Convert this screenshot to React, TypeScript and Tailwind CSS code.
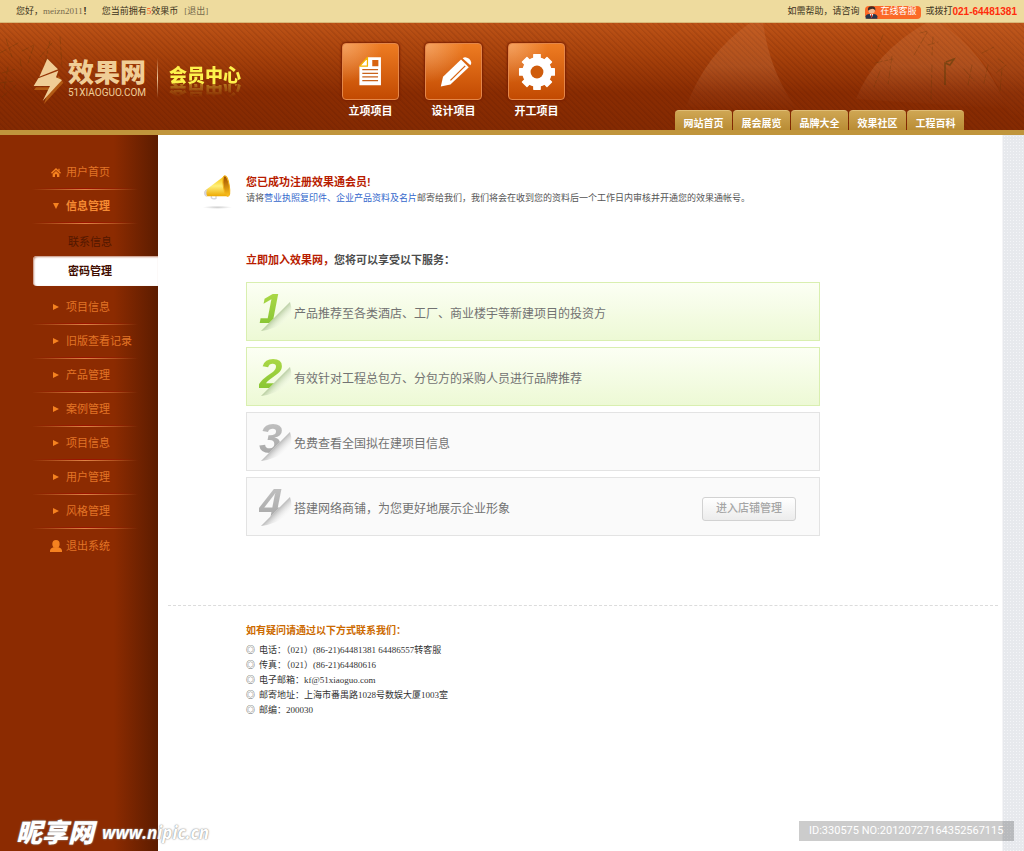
import type { ReactNode } from 'react';

const tinyText = 'font-["Liberation_Serif","Noto_Sans_CJK_SC",serif] text-[9px]';

const gearAngles = [0, 45, 90, 135];

function DocumentIcon() {
  return (
    <svg viewBox="0 0 171 171" className="size-full" aria-hidden="true">
      <path d="M76 41H118V128H51V70Z" fill="#fff" />
      <path d="M52 69L76 42V69Z" fill="#fff" stroke="#f5b301" strokeWidth="4" strokeLinejoin="round" />
      <path d="M91 50H110V69H91Z" fill="#d8630f" />
      <path d="M60 80H109M60 91H109M60 102H109M60 114H109" stroke="#c9631c" strokeWidth="4" />
    </svg>
  );
}

function PencilIcon() {
  return (
    <svg viewBox="0 0 171 171" className="size-full" aria-hidden="true">
      <path d="M46 132L53 102L109 48L133 72L76 126Z" fill="#fff" />
      <path d="M114 44Q122 37 134 46Q145 57 138 66Z" fill="#fff" />
      <path d="M110 46L138 71" stroke="#d8630f" strokeWidth="3" />
      <path d="M76 113L122 68" stroke="#d8630f" strokeWidth="4" />
    </svg>
  );
}

function GearIcon() {
  return (
    <svg viewBox="0 0 171 171" className="size-full" aria-hidden="true">
      {gearAngles.map((angle) => (
        <rect key={angle} x="75" y="31" width="24" height="112" rx="2" fill="#fff" transform={`rotate(${angle} 87 87)`} />
      ))}
      <circle cx="87" cy="87" r="46" fill="#fff" />
      <circle cx="87" cy="87" r="20" fill="#cf5c0c" />
    </svg>
  );
}

const projects: { label: string; icon: ReactNode }[] = [
  { label: '立项项目', icon: <DocumentIcon /> },
  { label: '设计项目', icon: <PencilIcon /> },
  { label: '开工项目', icon: <GearIcon /> },
];

const tabs = ['网站首页', '展会展览', '品牌大全', '效果社区', '工程百科'];

const lowerMenu = ['项目信息', '旧版查看记录', '产品管理', '案例管理', '项目信息', '用户管理', '风格管理'];

const services = [
  { text: '产品推荐至各类酒店、工厂、商业楼宇等新建项目的投资方', active: true },
  { text: '有效针对工程总包方、分包方的采购人员进行品牌推荐', active: true },
  { text: '免费查看全国拟在建项目信息', active: false },
  { text: '搭建网络商铺，为您更好地展示企业形象', active: false, action: '进入店铺管理' },
];

const contacts = [
  '电话：（021）(86-21)64481381 64486557转客服',
  '传真：（021）(86-21)64480616',
  '电子邮箱：kf@51xiaoguo.com',
  '邮寄地址：上海市番禺路1028号数娱大厦1003室',
  '邮编：200030',
];

function TopBar() {
  return (
    <div className={`${tinyText} flex h-[23px] items-center justify-between border-b border-[#d9b878] bg-[#eedb9e] pt-[2px] pr-[7px] pl-4 text-[#3c3320]`}>
      <p className="flex items-center whitespace-pre">
        <span>您好，</span>
        <span className="text-[#766a4c]">meizn2011</span>
        <span className="font-bold">！</span>
        <span className="ml-[10px]">您当前拥有</span>
        <span className="text-[#ff4a10]">5</span>
        <span>效果币</span>
        <a href="#logout" className="ml-[6px] text-[#766a4c]">[退出]</a>
      </p>
      <div className="flex items-center">
        <span>如需帮助，请咨询</span>
        <a href="#service" className="ml-[6px] flex h-[13px] items-center rounded-[4px] bg-[#fb6a28] pr-[5px] text-white">
          <svg viewBox="0 0 39 39" className="mr-[2px] size-[13px]" aria-hidden="true">
            <path d="M2 38V31Q3 25 13 24H26Q36 25 37 31V38Z" fill="#26364c" />
            <path d="M14 24H25L20 35Z" fill="#fff" />
            <path d="M18 25H21L22 32L20 36L18 32Z" fill="#c92b1c" />
            <circle cx="20" cy="13" r="10" fill="#f1b58b" />
            <path d="M9 14Q7 1 20 1Q33 1 31 14Q28 8 22 8Q14 9 9 14Z" fill="#3d2a25" />
          </svg>
          在线客服
        </a>
        <span className="ml-1">或拨打</span>
        <span className='font-["Liberation_Sans",sans-serif] text-[10px] leading-[12px] font-bold text-[#ff2d0c]'>021-64481381</span>
      </div>
    </div>
  );
}

function HeaderArt() {
  return (
    <>
      <svg viewBox="0 0 360 107" className="absolute top-0 right-0 h-[107px] w-[360px]" aria-hidden="true">
        <defs>
          <linearGradient id="petal" x1="0" y1="0" x2="0" y2="1">
            <stop offset="0" stopColor="#ffb98a" stopOpacity="0.1" />
            <stop offset="0.5" stopColor="#ffb98a" stopOpacity="0.16" />
            <stop offset="1" stopColor="#ffb98a" stopOpacity="0" />
          </linearGradient>
        </defs>
        <path d="M22 84Q42 30 86 0H99Q106 50 133 86Z" fill="url(#petal)" />
        <path d="M192 76Q210 30 262 0H276Q318 26 344 86Z" fill="url(#petal)" />
        <path d="M276 0H360V94H346Q326 30 276 0Z" fill="url(#petal)" opacity="0.5" />
        <g fill="none" stroke="#5a3506" strokeWidth="1" strokeLinecap="round" opacity="0.28" strokeDasharray="7 3 3 2">
          <path d="M219 12L213 27M211 40L229 36M228 33L224 62M216 48L210 64" />
          <path d="M256 10L264 8L250 32M264 22L274 19M269 14L268 32" />
          <path d="M268 42L267 76M300 46L310 58M308 42L304 62" />
          <path d="M324 42L320 60M334 36L342 42L332 50M338 46L336 68M318 30L330 24" />
        </g>
        <path d="M282 39L290 36L286 42L281 40V62" fill="none" stroke="#4c3a05" strokeWidth="1.5" opacity="0.5" />
      </svg>
      <svg viewBox="0 0 70 90" className="absolute top-0 left-0 h-[90px] w-[70px]" aria-hidden="true">
        <g fill="none" stroke="#5a3506" strokeWidth="1" strokeLinecap="round" opacity="0.3" strokeDasharray="7 3 3 2">
          <path d="M6 16L12 34M0 30L18 20M22 28L34 22L28 40M40 34L52 20M50 18L44 44M60 14L62 44" />
          <path d="M2 50L16 46M8 44L4 66M0 60L14 58M20 36L22 48M2 74L16 62" />
        </g>
      </svg>
    </>
  );
}

function Header() {
  return (
    <header className="relative flex h-[112px] border-b-[5px] border-[#c0953c] bg-[repeating-linear-gradient(45deg,rgba(60,10,0,0.1)_0px,rgba(60,10,0,0.1)_1px,transparent_2px,transparent_4px),linear-gradient(180deg,#bd5317_0%,#a8420b_30%,#8a2c02_65%,#842a02_100%)]">
      <HeaderArt />
      <div className="relative flex w-[342px] shrink-0 pt-[35px] pl-8">
        <a href="#home" className="flex h-[46px] text-[#f0cd96]">
          <svg viewBox="96 174 96 138" className="h-[46px] w-8" aria-hidden="true">
            <path d="M102 270L108 262H152L176 228L190 248L132 312L146 270Z" fill="#b25a14" />
            <path d="M142 176L174 208L118 230Z" fill="#f0cd96" />
            <path d="M115 235L175 212L168 232L186 240L128 303L150 258H101Z" fill="#f0cd96" />
          </svg>
          <span className="ml-1 flex flex-col">
            <span className="text-[26px] leading-[30px] font-black">效果网</span>
            <span className="font-[Roboto,sans-serif] text-[10px] leading-[10px]">51XIAOGUO.COM</span>
          </span>
        </a>
        <span className="ml-[11px] h-10 w-px bg-linear-to-b from-transparent via-[#eec79a] to-transparent" />
        <span className="ml-[11px] h-[22px] text-[18px] leading-[36px] font-black text-[#fdf24c] [-webkit-box-reflect:below_4px_linear-gradient(transparent_40%,rgba(0,0,0,0.35))]">会员中心</span>
      </div>
      <nav className="relative flex gap-[26px] pt-5">
        {projects.map((project) => (
          <a key={project.label} href="#project" className="flex w-[57px] flex-col items-center text-[11px] leading-[22px] font-bold text-white">
            <span className="size-[57px] overflow-hidden rounded-[4px] border border-[#e58748] bg-[radial-gradient(ellipse_at_0%_0%,rgba(255,220,190,0.4)_0%,transparent_50%),linear-gradient(180deg,#ee7c22,#c24a02)] shadow-[0_0_2px_1px_#7a1f00]">
              {project.icon}
            </span>
            {project.label}
          </a>
        ))}
      </nav>
      <nav className="relative mr-[60px] ml-auto flex gap-px self-end">
        {tabs.map((tab) => (
          <a key={tab} href="#tab" className="flex h-5 w-[57px] items-center justify-center rounded-t-[4px] border-t border-[#dfbd74] bg-linear-to-b from-[#cfa653] to-[#b98c34] pt-[6px] text-[10px] font-bold whitespace-nowrap text-white">
            {tab}
          </a>
        ))}
      </nav>
    </header>
  );
}

function MenuRow({ icon, label, bold = false, line = true }: { icon: ReactNode; label: string; bold?: boolean; line?: boolean }) {
  return (
    <li className="flex h-[34px] flex-col">
      <a href="#menu" className={`flex flex-1 items-center gap-1 pl-[50px] ${bold ? 'font-bold text-[#f58a33]' : 'text-[#e27426]'}`}>
        <span className="flex w-3 justify-center">{icon}</span>
        {label}
      </a>
      {line && (
        <span className="ml-8 flex w-[106px] flex-col">
          <span className="h-px bg-linear-to-r from-transparent via-[#9c1200] to-transparent" />
          <span className="h-px bg-linear-to-r from-transparent via-[#e08446] to-transparent" />
        </span>
      )}
    </li>
  );
}

function Arrow({ down = false }: { down?: boolean }) {
  return (
    <svg viewBox="0 0 6 6" className="size-[6px]" aria-hidden="true">
      <path d={down ? 'M0 0H6L3 6Z' : 'M0 0L6 3L0 6Z'} fill="#f58220" />
    </svg>
  );
}

function Sidebar() {
  return (
    <aside className="w-[158px] shrink-0 bg-[linear-gradient(90deg,#8c2b01_0%,#8c2b01_72%,#5c1c00_100%)] pt-[21px] text-[11px]">
      <ul>
        <MenuRow
          label="用户首页"
          icon={
            <svg viewBox="0 0 30 27" className="h-[9px] w-[10px]" aria-hidden="true">
              <path d="M15 0L30 14L27 17L15 6L3 17L0 14ZM15 9L25 18V27H18V19H12V27H5V18ZM22 2H26V9L22 6Z" fill="#f58220" />
            </svg>
          }
        />
        <MenuRow label="信息管理" bold icon={<Arrow down />} />
        <li>
          <ul className="pt-1 pb-[5px]">
            <li>
              <a href="#contact" className="flex h-7 items-center pl-[68px] text-[#521700]">联系信息</a>
            </li>
            <li className="pl-[33px]">
              <a href="#password" className="flex h-[30px] items-center rounded-l-[4px] bg-white pl-[35px] font-bold text-[#3f0c00] shadow-[inset_1px_1px_2px_#c08a74]">密码管理</a>
            </li>
          </ul>
        </li>
        {lowerMenu.map((label, index) => (
          <MenuRow key={index} label={label} icon={<Arrow />} />
        ))}
        <MenuRow
          label="退出系统"
          line={false}
          icon={
            <svg viewBox="0 0 36 36" className="size-3" aria-hidden="true">
              <ellipse cx="18" cy="12" rx="11" ry="12" fill="#f58220" />
              <path d="M0 36V31Q1 25 10 22H26Q35 25 36 31V36Z" fill="#f58220" />
            </svg>
          }
        />
      </ul>
    </aside>
  );
}

function Megaphone() {
  return (
    <svg viewBox="0 0 96 108" className="h-9 w-8 shrink-0" aria-hidden="true">
      <defs>
        <linearGradient id="horn" x1="0" y1="0" x2="0" y2="1">
          <stop offset="0" stopColor="#f6c000" />
          <stop offset="0.5" stopColor="#fff07a" />
          <stop offset="1" stopColor="#eda800" />
        </linearGradient>
        <linearGradient id="bell" x1="0" y1="0" x2="0" y2="1">
          <stop offset="0" stopColor="#9a4a00" />
          <stop offset="1" stopColor="#ffc51c" />
        </linearGradient>
        <radialGradient id="ground">
          <stop offset="0" stopColor="#cfcfcf" />
          <stop offset="1" stopColor="#fff" />
        </radialGradient>
      </defs>
      <ellipse cx="46" cy="103" rx="44" ry="5" fill="url(#ground)" />
      <path d="M28 68V74Q34 80 42 76V68" fill="none" stroke="#d4d4da" strokeWidth="4" />
      <path d="M10 52L68 8Q78 36 78 70H12Q4 60 10 52Z" fill="url(#horn)" />
      <path d="M10 52Q2 60 10 70L16 69Q10 60 16 48Z" fill="#d6d4dd" />
      <ellipse cx="73" cy="39" rx="9" ry="31" fill="url(#bell)" stroke="#f2b21a" strokeWidth="3" transform="rotate(-9 73 39)" />
    </svg>
  );
}

function Service({ index, text, active, action }: { index: number; text: string; active: boolean; action?: string }) {
  return (
    <li className={`flex h-[59px] items-center border pt-1 pr-[23px] pl-3 text-[12px] text-[#727272] ${active ? 'border-[#d9efb0] bg-linear-to-b from-[#fcfff4] to-[#edf9d5]' : 'border-[#e3e3e3] bg-[#fafafa]'}`}>
      <span className="relative flex h-12 w-[35px] shrink-0 self-start">
        <svg viewBox="0 0 35 48" className="absolute inset-0 size-full" aria-hidden="true">
          <defs>
            <linearGradient id={`fold${index}`} x1="23" y1="23" x2="31" y2="31" gradientUnits="userSpaceOnUse">
              <stop offset="0" stopColor={active ? '#93b078' : '#8f8f8f'} stopOpacity="0.6" />
              <stop offset="1" stopColor="#ffffff" stopOpacity="0" />
            </linearGradient>
          </defs>
          <path d="M2 44L31 15Q35 26 28 33Q18 42 2 44Z" fill={`url(#fold${index})`} />
        </svg>
        <span className={`relative h-12 bg-linear-to-b bg-clip-text pr-2 font-["Liberation_Sans",sans-serif] text-[42px] leading-[44px] font-bold text-transparent italic [clip-path:polygon(0_0,40px_0,40px_6px,0_46px)] ${active ? 'from-[#b2dc4a] to-[#7cbf2d]' : 'from-[#c4c4c4] to-[#a0a0a0]'}`}>
          {index}
        </span>
      </span>
      <span>{text}</span>
      {action && (
        <button type="button" className="ml-auto h-6 w-[94px] rounded-[3px] border border-[#d2d2d2] bg-linear-to-b from-white to-[#ececec] text-[11px] font-medium text-[#a6a6a6]">
          {action}
        </button>
      )}
    </li>
  );
}

export default function App() {
  return (
    <div className='relative flex min-h-screen flex-col bg-white font-["Liberation_Sans","Noto_Sans_CJK_SC",sans-serif]' lang="zh-CN">
      <TopBar />
      <Header />
      <div className="flex flex-1">
        <Sidebar />
        <main className="min-w-0 flex-1 pt-[38px]">
          <section className="flex gap-3 pl-11">
            <Megaphone />
            <div>
              <h1 className="text-[11px] leading-[18px] font-bold text-[#b81c00]">您已成功注册效果通会员!</h1>
              <p className={`${tinyText} leading-[14px] text-[#555]`}>
                请将<a href="#files" className="text-[#3468cc]">营业执照复印件、企业产品资料及名片</a>邮寄给我们，我们将会在收到您的资料后一个工作日内审核并开通您的效果通帐号。
              </p>
            </div>
          </section>
          <section className="mt-[42px] mr-6 ml-[88px] max-w-[574px]">
            <h2 className="text-[11px] leading-[18px] font-bold text-[#4d4d4d]">
              <span className="text-[#b81c00]">立即加入效果网，</span>您将可以享受以下服务：
            </h2>
            <ol className="mt-[13px] flex flex-col gap-[6px]">
              {services.map((service, index) => (
                <Service key={service.text} index={index + 1} {...service} />
              ))}
            </ol>
          </section>
          <footer className="mt-[69px] mr-1 ml-[10px] border-t border-dashed border-[#dcdcdc] pt-4 pl-[78px]">
            <h2 className="text-[10px] leading-[18px] font-bold text-[#cc6a00]">如有疑问请通过以下方式联系我们：</h2>
            <ul className={`${tinyText} mt-[3px] leading-[15px] text-[#333]`}>
              {contacts.map((contact) => (
                <li key={contact} className="flex gap-1">
                  <span>◎</span>
                  <span>{contact}</span>
                </li>
              ))}
            </ul>
          </footer>
        </main>
        <div className="w-[22px] shrink-0 border-l border-[#f4f4f6] bg-[#e7e9ed] bg-[radial-gradient(circle,#f4f5f8_1px,transparent_1px)] bg-size-[3px_3px]" />
      </div>
      <div className="absolute bottom-[6px] left-4 flex items-center gap-2 leading-[24px] text-white italic [text-shadow:0_0_1px_#888,0_0_2px_#999]">
        <span className="text-[26px] font-black">昵享网</span>
        <span className='font-["Open_Sans",sans-serif] text-[17px] font-bold'>www.nipic.cn</span>
      </div>
      <div className="absolute right-[10px] bottom-[10px] flex h-5 w-[215px] items-center bg-black/20 pl-[10px] font-[Roboto,sans-serif] text-[11px] text-white">
        ID:330575 NO:20120727164352567115
      </div>
    </div>
  );
}
